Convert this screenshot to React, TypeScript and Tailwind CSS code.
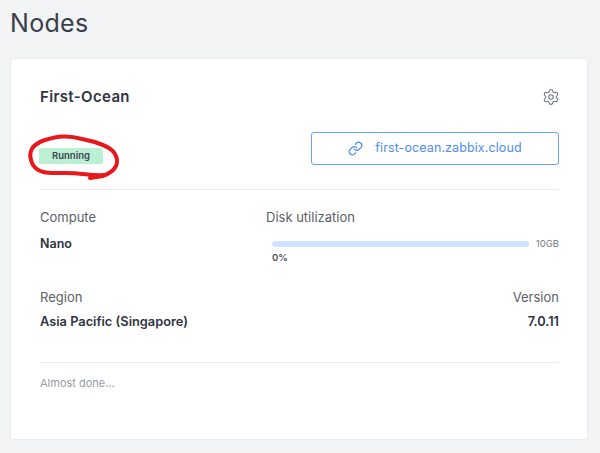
import React from "react";
import { Settings, Link } from "lucide-react";

export default function App() {
  return (
    <div className="h-[453px] w-[600px] overflow-hidden bg-[#f2f3f5] pl-[10px] pr-[12px] font-['Inter',sans-serif] text-[#2f3540]">
      <h1 className="h-[58px] pt-[5px] text-[25px] leading-[36px] font-normal tracking-[0.3px] text-[#3a404b]">Nodes</h1>

      <div className="relative h-[382px] rounded-[3px] border border-[#e9ebee] bg-white pl-[29px] pr-[28px] pt-[29px]">
        {/* Card header */}
        <div className="flex h-[18px] items-center justify-between">
          <h2 className="text-[15px] leading-[18px] font-semibold tracking-[0.35px]">First-Ocean</h2>
          <Settings className="-mr-[1px] h-[18px] w-[18px] text-[#6f747c]" strokeWidth={1.4} />
        </div>

        <div className="mt-[25px] flex h-[34px] items-center justify-between">
          <span className="-ml-[1px] mt-[16px] flex h-[16px] w-[64px] items-center justify-center rounded-[2px] bg-[#bbf0d3] text-[9.5px] font-semibold text-[#3c4450]">
            Running
          </span>
          <a className="flex h-[33px] w-[248px] items-center justify-center gap-[12px] rounded-[3px] border border-[#6aa1fb] text-[12.5px] tracking-[0.1px] text-[#4d8df6]">
            <Link className="h-[15px] w-[15px]" strokeWidth={2} />
            first-ocean.zabbix.cloud
          </a>
        </div>

        <div className="mt-[24px] border-t border-[#e8e9eb]" />

        {/* Compute and disk */}
        <div className="mt-[19px] flex h-[64px]">
          <div className="w-[226px]">
            <div className="text-[13px] leading-[16px] text-[#5b6068]">Compute</div>
            <div className="mt-[11px] text-[12.5px] leading-[16px] font-semibold">Nano</div>
          </div>
          <div className="flex-1">
            <div className="text-[13px] leading-[16px] text-[#5b6068]">Disk utilization</div>
            <div className="mt-[14px] flex items-center justify-between pl-[6px]">
              <div className="h-[6px] w-[257px] rounded-full bg-[#cfe2ff]" />
              <span className="text-[9.5px] leading-[10px] text-[#777c83]">10GB</span>
            </div>
            <div className="mt-[3px] pl-[6px] text-[9.5px] leading-[12px] font-semibold text-[#4b5058]">0%</div>
          </div>
        </div>

        {/* Region and version */}
        <div className="mt-[16px] flex justify-between">
          <div>
            <div className="text-[13px] leading-[16px] text-[#5b6068]">Region</div>
            <div className="mt-[9px] text-[12.8px] leading-[16px] font-semibold">Asia Pacific (Singapore)</div>
          </div>
          <div className="text-right">
            <div className="text-[13px] leading-[16px] text-[#5b6068]">Version</div>
            <div className="mt-[9px] text-[12.8px] leading-[16px] font-semibold">7.0.11</div>
          </div>
        </div>

        <div className="mt-[32px] border-t border-[#e8e9eb]" />
        <div className="mt-[13px] text-[11px] leading-[14px] text-[#989ca3]">Almost done...</div>

        {/* Hand-drawn annotation */}
        <svg className="absolute left-[-11px] top-[-59px] h-[453px] w-[600px]" viewBox="0 0 600 453" fill="none">
          <path
            d="M104 175 C92 176 82 173 66 173 C52 173 37 175 32 163 C27 151 33 144 45 140 C58 136 68 135 82 139 C96 142 111 146 115 154 C120 163 116 171 103 176 L90 178"
            stroke="#e8171b"
            strokeWidth="4"
            strokeLinecap="round"
          />
        </svg>
      </div>
    </div>
  );
}
